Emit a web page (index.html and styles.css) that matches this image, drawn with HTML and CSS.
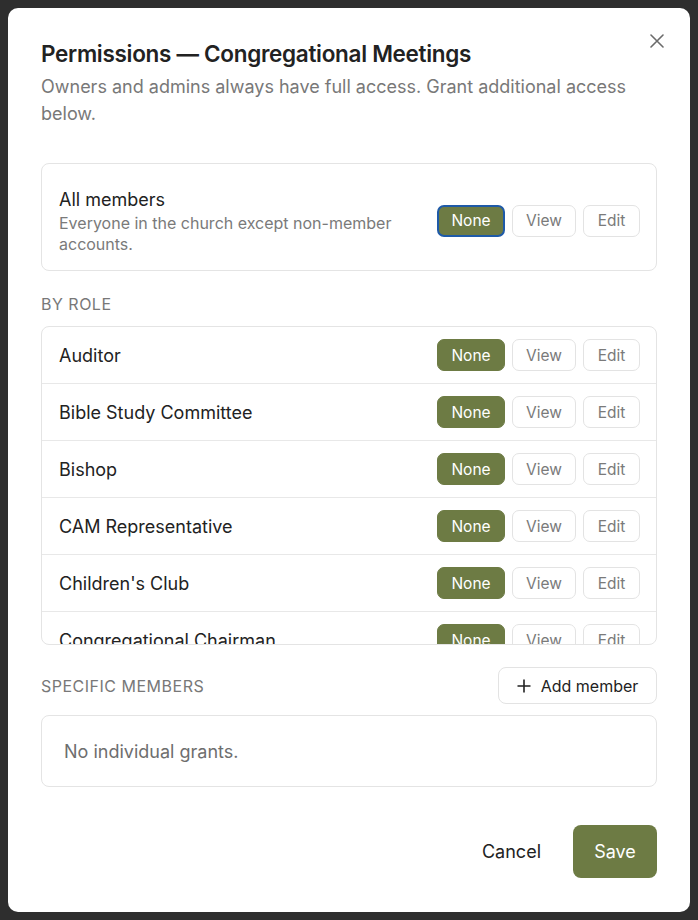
FILE: index.html
```html
<!DOCTYPE html>
<html lang="en">
<head>
<meta charset="utf-8">
<title>Permissions — Congregational Meetings</title>
<link rel="stylesheet" href="styles.css">
</head>
<body>
<div class="backdrop">
  <div class="modal">
    <button class="close" aria-label="Close">
      <svg width="14" height="14" viewBox="0 0 14 14"><path d="M1 1L13 13M13 1L1 13" stroke="#6b6b6b" stroke-width="1.6" stroke-linecap="round"/></svg>
    </button>
    <h1 class="title">Permissions — Congregational Meetings</h1>
    <p class="subtitle">Owners and admins always have full access. Grant additional access below.</p>

    <div class="card all-card">
      <div class="all-text">
        <div class="all-title">All members</div>
        <div class="all-desc">Everyone in the church except non-member accounts.</div>
      </div>
      <div class="seg">
        <button class="opt active focus">None</button>
        <button class="opt">View</button>
        <button class="opt">Edit</button>
      </div>
    </div>

    <div class="section-label">BY ROLE</div>
    <div class="card role-list">
      <div class="role-row"><span class="role-name">Auditor</span><div class="seg"><button class="opt active">None</button><button class="opt">View</button><button class="opt">Edit</button></div></div>
      <div class="role-row"><span class="role-name">Bible Study Committee</span><div class="seg"><button class="opt active">None</button><button class="opt">View</button><button class="opt">Edit</button></div></div>
      <div class="role-row"><span class="role-name">Bishop</span><div class="seg"><button class="opt active">None</button><button class="opt">View</button><button class="opt">Edit</button></div></div>
      <div class="role-row"><span class="role-name">CAM Representative</span><div class="seg"><button class="opt active">None</button><button class="opt">View</button><button class="opt">Edit</button></div></div>
      <div class="role-row"><span class="role-name">Children's Club</span><div class="seg"><button class="opt active">None</button><button class="opt">View</button><button class="opt">Edit</button></div></div>
      <div class="role-row"><span class="role-name">Congregational Chairman</span><div class="seg"><button class="opt active">None</button><button class="opt">View</button><button class="opt">Edit</button></div></div>
    </div>

    <div class="specific-head">
      <div class="section-label flat">SPECIFIC MEMBERS</div>
      <button class="add-btn">
        <svg width="14" height="14" viewBox="0 0 14 14"><path d="M7 0.5V13.5M0.5 7H13.5" stroke="#222" stroke-width="1.6"/></svg>
        Add member
      </button>
    </div>
    <div class="card empty">No individual grants.</div>

    <div class="footer">
      <button class="cancel">Cancel</button>
      <button class="save">Save</button>
    </div>
  </div>
</div>
</body>
</html>
```

FILE: styles.css
```css
* { box-sizing: border-box; }
html, body { margin: 0; padding: 0; }
body {
  background: #2e2e2e;
  font-family: Inter, "Noto Sans", "Liberation Sans", sans-serif;
  color: #222;
}
button { font-family: inherit; cursor: pointer; }
.backdrop {
  padding: 8px;
  min-height: 920px;
}
.modal {
  position: relative;
  width: 682px;
  height: 904px;
  background: #fff;
  border-radius: 10px;
  padding: 32px 33px 34px 33px;
  display: flex;
  flex-direction: column;
}
.close {
  position: absolute;
  top: 26px;
  right: 26px;
  width: 14px;
  height: 14px;
  padding: 0;
  border: 0;
  background: none;
  display: flex;
}
.title {
  margin: 0;
  font-size: 22.5px;
  line-height: 28px;
  font-weight: 600;
  letter-spacing: -0.3px;
  color: #222;
}
.subtitle {
  margin: 5px 0 0;
  font-size: 18px;
  line-height: 27px;
  color: #787878;
  padding-right: 10px;
}
.card {
  border: 1px solid #e4e4e4;
  border-radius: 8px;
  background: #fff;
}
.all-card {
  margin-top: 36px;
  padding: 22px 16px 15px 17px;
  display: flex;
  align-items: center;
  gap: 20px;
}
.all-text { flex: 1; }
.all-title {
  font-size: 18px;
  line-height: 27px;
  color: #222;
}
.all-desc {
  font-size: 16px;
  line-height: 21px;
  color: #7a7a7a;
  padding-right: 10px;
}
.seg {
  display: flex;
  gap: 7px;
  flex-shrink: 0;
}
.opt {
  height: 32px;
  border: 1px solid #e3e3e3;
  border-radius: 7px;
  background: #fff;
  color: #7a7a7a;
  font-size: 15.5px;
  padding: 0;
  width: 64px;
}
.opt:nth-child(3) { width: 57px; }
.opt.active {
  width: 68px;
  background: #6d7b44;
  border-color: #6d7b44;
  color: #fff;
}
.opt.focus {
  border: 2px solid #1e5aa8;
}
.section-label {
  margin-top: 24px;
  margin-bottom: 13px;
  font-size: 16px;
  line-height: 18px;
  letter-spacing: 0.5px;
  color: #787878;
}
.section-label.flat { margin: 0; }
.role-list {
  height: 319px;
  overflow: hidden;
}
.role-row {
  height: 57px;
  border-bottom: 1px solid #e8e8e8;
  display: flex;
  align-items: center;
  justify-content: space-between;
  padding: 0 16px 0 17px;
}
.role-name {
  font-size: 18px;
  color: #222;
}
.specific-head {
  margin-top: 22px;
  display: flex;
  align-items: center;
  justify-content: space-between;
}
.add-btn {
  height: 37px;
  width: 159px;
  border: 1px solid #e3e3e3;
  border-radius: 8px;
  background: #fff;
  color: #222;
  font-size: 16px;
  display: flex;
  align-items: center;
  justify-content: center;
  gap: 10px;
  padding: 0;
}
.empty {
  margin-top: 11px;
  height: 72px;
  display: flex;
  align-items: center;
  padding: 0 22px;
  font-size: 18px;
  color: #6e6e6e;
}
.footer {
  margin-top: auto;
  display: flex;
  justify-content: flex-end;
  align-items: center;
  gap: 14px;
}
.cancel {
  height: 53px;
  border: 0;
  background: none;
  font-size: 18px;
  color: #222;
  padding: 0 18px;
}
.save {
  height: 53px;
  width: 84px;
  border: 0;
  border-radius: 8px;
  background: #6d7b44;
  color: #fff;
  font-size: 18px;
  padding: 0;
}
```
